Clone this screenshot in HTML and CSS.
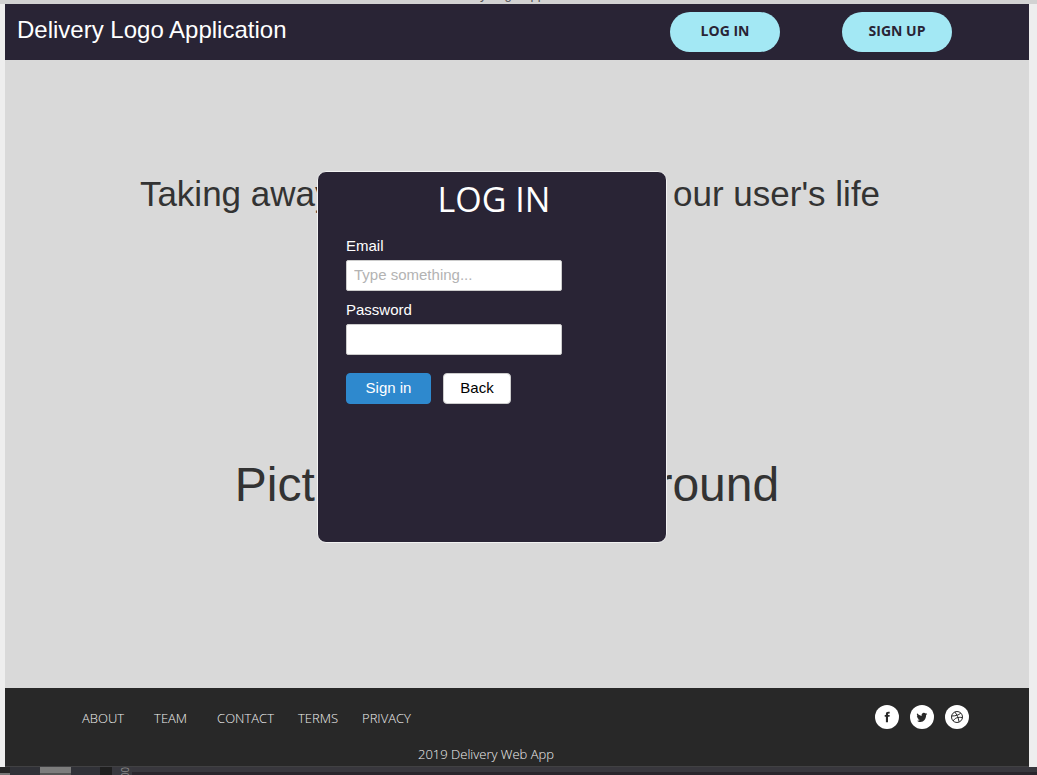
FILE: index.html
```html
<!DOCTYPE html>
<html lang="en">
<head>
<meta charset="utf-8">
<title>Delivery Logo Application</title>
<link rel="stylesheet" href="styles.css">
</head>
<body>
<div class="titlebar"><span>Delivery Logo Application</span></div>
<div class="page">
  <header class="header">
    <div class="brand">Delivery Logo Application</div>
    <div class="actions">
      <button class="pill" type="button">LOG IN</button>
      <button class="pill" type="button">SIGN UP</button>
    </div>
  </header>
  <main class="hero">
    <h1 class="tagline">Taking away the inconvenience of our user's life</h1>
    <p class="caption">Picture in the background</p>
    <form class="modal">
      <h2 class="modal-title">LOG IN</h2>
      <div class="fields">
        <label class="label" for="email">Email</label>
        <input class="field" id="email" type="email" placeholder="Type something...">
        <label class="label" for="password">Password</label>
        <input class="field" id="password" type="password">
        <div class="buttons">
          <button class="btn primary" type="button">Sign in</button>
          <button class="btn" type="button">Back</button>
        </div>
      </div>
    </form>
  </main>
  <footer class="footer">
    <div class="footer-row">
      <nav class="links">
        <a class="roomy" href="#">ABOUT</a>
        <a class="roomy" href="#">TEAM</a>
        <a href="#">CONTACT</a>
        <a href="#">TERMS</a>
        <a href="#">PRIVACY</a>
      </nav>
      <div class="social">
        <a href="#" aria-label="Facebook"><svg viewBox="0 0 24 24"><path d="M10.900 17.200v-5.400H9.700V9.900h1.200V9.100c0-1.600.8-2.400 2.400-2.400h1.400v1.900h-.9c-.6 0-.8.3-.8.8v.5h1.700l-.2 1.900h-1.500v5.400z"/></svg></a>
        <a href="#" aria-label="Twitter"><svg viewBox="0 0 24 24"><path d="M17.400 9.500l-1.300.6c0 4.200-2.400 6.900-5.600 6.900-1.500 0-2.700-.5-3.400-1.300 1.100.1 2.100-.2 2.800-.7-1.100-.1-1.900-.6-2.300-1.500h1c-1.100-.5-1.700-1.300-1.700-2.400l.8.200c-.9-.8-1-1.900-.6-3 1.300 1.600 2.900 2.400 4.500 2.600-.2-1.800.8-3.100 2.300-3.100.7 0 1.300.3 1.700.8l1.400-.5-.8 1.200z"/></svg></a>
        <a href="#" aria-label="Dribbble"><svg viewBox="0 0 24 24"><g class="ball"><circle cx="12" cy="12" r="5.500"/><path d="M9.800 7c2.200 2.600 3.600 5.900 4.300 9.900M6.600 11c4 0 6.900-.8 9.200-2.900M8.100 16c1.800-3 4.700-4.300 9.300-3.400"/></g></svg></a>
      </div>
    </div>
    <p class="copyright">2019 Delivery Web App</p>
  </footer>
</div>
<div class="dock">
  <span class="corner"></span><span class="slot"></span><span class="thumb"></span><span class="slot short"></span><span class="dark"></span><span class="ruler">00</span><span class="track"></span>
</div>
</body>
</html>
```

FILE: styles.css
```css
* { box-sizing: border-box; }
body {
  margin: 0;
  min-height: 100vh;
  display: flex;
  flex-direction: column;
  background: #eee;
  font-family: "Liberation Sans", Arial, sans-serif;
}
.titlebar {
  height: 4px;
  display: flex;
  align-items: flex-end;
  justify-content: center;
  padding: 0 12px 3px 0;
  overflow: hidden;
  background: #d2d2d2;
  color: #555;
  font-size: 13px;
  line-height: 12px;
}
.page {
  flex: 1;
  display: flex;
  flex-direction: column;
  margin: 0 8px 0 5px;
}
.header {
  display: flex;
  align-items: center;
  justify-content: space-between;
  padding: 8px 77px 8px 12px;
  background: #292435;
}
.brand {
  color: #fff;
  font-size: 24px;
  line-height: 28px;
  padding-bottom: 4px;
}
.actions { display: flex; gap: 62px; }
.pill {
  width: 110px;
  height: 40px;
  padding: 0 0 3px;
  border: 0;
  border-radius: 20px;
  background: #a3e8f4;
  color: #292435;
  font: bold 14px "Open Sans", sans-serif;
}
.hero {
  position: relative;
  flex: 1;
  padding: 113px 16px 0 0;
  background: #d9d9d9;
  color: #333;
  text-align: center;
}
.tagline {
  margin: 0;
  padding-left: 2px;
  font-size: 35px;
  font-weight: normal;
  line-height: 42px;
}
.caption {
  margin: 242px 0 0;
  padding-right: 4px;
  font-size: 48px;
  line-height: 56px;
}
.modal {
  position: absolute;
  top: 111px;
  left: calc(50% - 200px);
  width: 350px;
  height: 372px;
  padding: 7px 28px;
  border: 1px solid #f2f2f2;
  border-radius: 9px;
  background: #292435;
  color: #fff;
  text-align: left;
}
.modal-title {
  margin: 0;
  padding-left: 4px;
  font: 400 34px/40px "Open Sans", sans-serif;
  text-align: center;
}
.fields {
  display: flex;
  flex-direction: column;
  width: 216px;
  margin-top: 17px;
}
.label {
  font-size: 15px;
  line-height: 20px;
  margin-bottom: 4px;
}
.field {
  width: 100%;
  height: 31px;
  margin-bottom: 9px;
  padding: 0 7px 2px;
  border: 1px solid #ccc;
  border-radius: 2px;
  background: #fff;
  font: 15px "Liberation Sans", Arial, sans-serif;
}
.field::placeholder { color: #b3b3b3; }
.buttons { display: flex; gap: 12px; margin-top: 9px; }
.btn {
  width: 68px;
  height: 31px;
  padding: 0 0 2px;
  border: 1px solid #ccc;
  border-radius: 4px;
  background: #fff;
  color: #000;
  font: 15px "Liberation Sans", Arial, sans-serif;
}
.btn.primary {
  width: 85px;
  border-color: #2e89ce;
  background: #2e89ce;
  color: #fff;
}
.footer {
  padding: 17px 60px 2px 77px;
  border-bottom: 1px solid #414143;
  background: #282828;
  color: #f0f0f0;
  font: 300 13px/20px "Open Sans", sans-serif;
}
.footer-row {
  display: flex;
  justify-content: space-between;
  align-items: center;
}
.links { display: flex; gap: 24px; padding-top: 2px; }
.links a { color: inherit; text-decoration: none; }
.links .roomy { margin-right: 6px; }
.social { display: flex; gap: 11px; }
.social a {
  display: flex;
  width: 24px;
  height: 24px;
  border-radius: 50%;
  background: #fff;
}
.social svg { width: 24px; height: 24px; fill: #282828; }
.ball { fill: none; stroke: #282828; stroke-width: 1; }
.copyright {
  margin: 15px 0 0;
  padding-right: 79px;
  text-align: center;
}
.dock {
  display: flex;
  height: 8px;
  overflow: hidden;
  background: #303137;
}
.corner { width: 10px; border-top: 6px solid #262626; background: #777; }
.slot { width: 30px; }
.slot.short { width: 29px; }
.thumb { width: 31px; border-bottom: 2px solid #555; background: #7d7d7d; }
.dark { width: 12px; background: #1f1f1f; }
.ruler {
  width: 20px;
  padding-left: 6px;
  background: #38383e;
  color: #888;
  font-size: 10px;
  line-height: 16px;
  writing-mode: vertical-rl;
}
.track { flex: 1; border-top: 5px solid #38373d; background: #29252c; }
```
